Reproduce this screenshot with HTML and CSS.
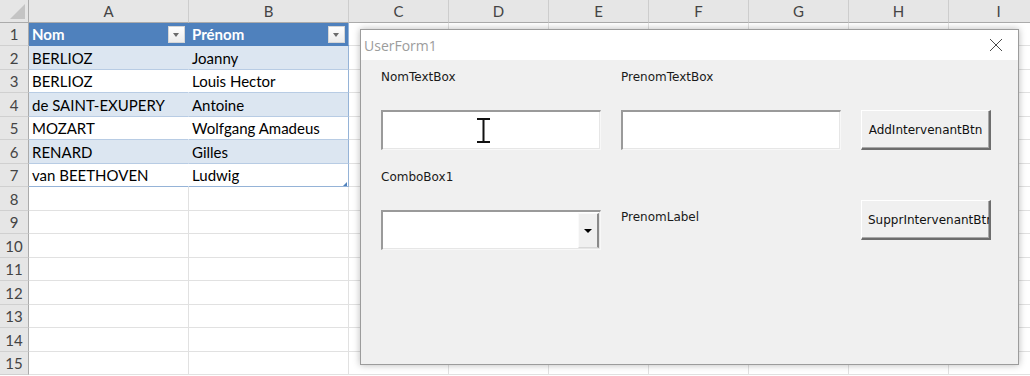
FILE: index.html
```html
<!DOCTYPE html>
<html lang="fr">
<head>
    <meta charset="UTF-8">
    <title>Intervenants - UserForm1</title>
    <link rel="stylesheet" href="styles.css">
</head>
<body>
    <div class="sheet">
        <div class="corner"><span class="corner-tri"></span></div>
        <div class="col-head">A</div>
        <div class="col-head">B</div>
        <div class="col-head">C</div>
        <div class="col-head">D</div>
        <div class="col-head">E</div>
        <div class="col-head">F</div>
        <div class="col-head">G</div>
        <div class="col-head">H</div>
        <div class="col-head">I</div>

        <div class="row-head">1</div>
        <div class="cell tbl tbl-head">Nom<span class="filter-btn"></span></div>
        <div class="cell tbl tbl-head tbl-end">Prénom<span class="filter-btn"></span></div>
        <div class="cell"></div><div class="cell"></div><div class="cell"></div><div class="cell"></div><div class="cell"></div><div class="cell"></div><div class="cell"></div>

        <div class="row-head">2</div>
        <div class="cell tbl band">BERLIOZ</div>
        <div class="cell tbl band tbl-end">Joanny</div>
        <div class="cell"></div><div class="cell"></div><div class="cell"></div><div class="cell"></div><div class="cell"></div><div class="cell"></div><div class="cell"></div>

        <div class="row-head">3</div>
        <div class="cell tbl">BERLIOZ</div>
        <div class="cell tbl tbl-end">Louis Hector</div>
        <div class="cell"></div><div class="cell"></div><div class="cell"></div><div class="cell"></div><div class="cell"></div><div class="cell"></div><div class="cell"></div>

        <div class="row-head">4</div>
        <div class="cell tbl band">de SAINT-EXUPERY</div>
        <div class="cell tbl band tbl-end">Antoine</div>
        <div class="cell"></div><div class="cell"></div><div class="cell"></div><div class="cell"></div><div class="cell"></div><div class="cell"></div><div class="cell"></div>

        <div class="row-head">5</div>
        <div class="cell tbl">MOZART</div>
        <div class="cell tbl tbl-end">Wolfgang Amadeus</div>
        <div class="cell"></div><div class="cell"></div><div class="cell"></div><div class="cell"></div><div class="cell"></div><div class="cell"></div><div class="cell"></div>

        <div class="row-head">6</div>
        <div class="cell tbl band">RENARD</div>
        <div class="cell tbl band tbl-end">Gilles</div>
        <div class="cell"></div><div class="cell"></div><div class="cell"></div><div class="cell"></div><div class="cell"></div><div class="cell"></div><div class="cell"></div>

        <div class="row-head">7</div>
        <div class="cell tbl tbl-last">van BEETHOVEN</div>
        <div class="cell tbl tbl-end tbl-last">Ludwig<span class="resize-handle"></span></div>
        <div class="cell"></div><div class="cell"></div><div class="cell"></div><div class="cell"></div><div class="cell"></div><div class="cell"></div><div class="cell"></div>

        <div class="row-head">8</div>
        <div class="cell"></div><div class="cell"></div><div class="cell"></div><div class="cell"></div><div class="cell"></div><div class="cell"></div><div class="cell"></div><div class="cell"></div><div class="cell"></div>
        <div class="row-head">9</div>
        <div class="cell"></div><div class="cell"></div><div class="cell"></div><div class="cell"></div><div class="cell"></div><div class="cell"></div><div class="cell"></div><div class="cell"></div><div class="cell"></div>
        <div class="row-head">10</div>
        <div class="cell"></div><div class="cell"></div><div class="cell"></div><div class="cell"></div><div class="cell"></div><div class="cell"></div><div class="cell"></div><div class="cell"></div><div class="cell"></div>
        <div class="row-head">11</div>
        <div class="cell"></div><div class="cell"></div><div class="cell"></div><div class="cell"></div><div class="cell"></div><div class="cell"></div><div class="cell"></div><div class="cell"></div><div class="cell"></div>
        <div class="row-head">12</div>
        <div class="cell"></div><div class="cell"></div><div class="cell"></div><div class="cell"></div><div class="cell"></div><div class="cell"></div><div class="cell"></div><div class="cell"></div><div class="cell"></div>
        <div class="row-head">13</div>
        <div class="cell"></div><div class="cell"></div><div class="cell"></div><div class="cell"></div><div class="cell"></div><div class="cell"></div><div class="cell"></div><div class="cell"></div><div class="cell"></div>
        <div class="row-head">14</div>
        <div class="cell"></div><div class="cell"></div><div class="cell"></div><div class="cell"></div><div class="cell"></div><div class="cell"></div><div class="cell"></div><div class="cell"></div><div class="cell"></div>
        <div class="row-head">15</div>
        <div class="cell"></div><div class="cell"></div><div class="cell"></div><div class="cell"></div><div class="cell"></div><div class="cell"></div><div class="cell"></div><div class="cell"></div><div class="cell"></div>
    </div>

    <div class="userform">
        <div class="form-title">
            <span class="form-caption">UserForm1</span>
            <svg class="close-icon" width="14" height="14" viewBox="0 0 14 14">
                <path d="M1 1 L13 13 M13 1 L1 13" stroke="#4a4a4a" stroke-width="1" fill="none"/>
            </svg>
        </div>
        <div class="form-body">
            <div class="form-label">NomTextBox</div>
            <div class="form-label">PrenomTextBox</div>
            <div></div>

            <div class="textbox">
                <svg class="ibeam" width="13" height="25" viewBox="0 0 13 25">
                    <rect x="0" y="0" width="13" height="2" fill="#111"/>
                    <rect x="5.5" y="0" width="2" height="25" fill="#111"/>
                    <rect x="0" y="23" width="13" height="2" fill="#111"/>
                </svg>
            </div>
            <div class="textbox"></div>
            <button class="vba-button">AddIntervenantBtn</button>

            <div class="form-label label-second">ComboBox1</div>

            <div class="combobox">
                <span class="combo-drop"><span class="combo-arrow"></span></span>
            </div>
            <div class="form-label label-combo-row">PrenomLabel</div>
            <button class="vba-button btn-suppr">SupprIntervenantBtn</button>
        </div>
    </div>
</body>
</html>
```

FILE: styles.css
```css
* {
    margin: 0;
    padding: 0;
    box-sizing: border-box;
}

body {
    position: relative;
    width: 1030px;
    height: 376px;
    overflow: hidden;
    background-color: #fff;
    font-family: Lato, "Liberation Sans", sans-serif;
    color: #000;
}

/* feuille excel */

.sheet {
    display: grid;
    grid-template-columns: 29px 160px 160px repeat(6, 100px) 100px;
    grid-template-rows: 23px repeat(7, 23px 24px) 23px;
    font-size: 15px;
}

.corner {
    position: relative;
    background-color: #e6e6e6;
    border-right: 1px solid #ababab;
    border-bottom: 1px solid #ababab;
}

.corner-tri {
    position: absolute;
    right: 3px;
    bottom: 3px;
    width: 0;
    height: 0;
    border-left: 15px solid transparent;
    border-bottom: 15px solid #c4c4c4;
}

.col-head {
    background-color: #e6e6e6;
    border-right: 1px solid #cdcdcd;
    border-bottom: 1px solid #ababab;
    color: #444;
    text-align: center;
    line-height: 22px;
}

.row-head {
    background-color: #e6e6e6;
    border-right: 1px solid #ababab;
    border-bottom: 1px solid #d0d0d0;
    color: #444;
    text-align: center;
    display: flex;
    align-items: flex-end;
    justify-content: center;
    padding-bottom: 1px;
    line-height: 20px;
}

.cell {
    position: relative;
    border-right: 1px solid #e1e1e1;
    border-bottom: 1px solid #e1e1e1;
    display: flex;
    align-items: flex-end;
    padding: 0 0 1px 3px;
    line-height: 20px;
    white-space: nowrap;
    overflow: hidden;
}

.tbl {
    border-right-color: transparent;
    border-bottom-color: #b8cce4;
}

.tbl-end {
    border-right-color: #95b3d7;
}

.tbl-last {
    border-bottom-color: #95b3d7;
}

.tbl-head {
    background-color: #4f81bd;
    border-bottom-color: #4f81bd;
    color: #fff;
    font-weight: bold;
}

.tbl-head.tbl-end {
    border-right-color: #95b3d7;
}

.band {
    background-color: #dce6f1;
}

.filter-btn {
    position: absolute;
    right: 3px;
    top: 3px;
    width: 17px;
    height: 17px;
    background: linear-gradient(#ffffff, #ececec);
    border: 1px solid #d6d6d6;
}

.filter-btn::after {
    content: "";
    position: absolute;
    left: 4px;
    top: 6px;
    border-left: 3.5px solid transparent;
    border-right: 3.5px solid transparent;
    border-top: 4px solid #6b6b6b;
}

.resize-handle {
    position: absolute;
    right: 1px;
    bottom: 0;
    width: 0;
    height: 0;
    border-left: 4px solid transparent;
    border-bottom: 4px solid #4f81bd;
}

/* userform */

.userform {
    position: absolute;
    left: 360px;
    top: 29px;
    width: 659px;
    height: 336px;
    background-color: #f0f0f0;
    border: 1px solid #9c9c9c;
    box-shadow: 0 0 7px rgba(0, 0, 0, 0.28);
    display: flex;
    flex-direction: column;
}

.form-title {
    height: 30px;
    background-color: #fff;
    display: flex;
    align-items: center;
    justify-content: space-between;
    padding: 0 15px 0 3px;
}

.form-caption {
    font-family: "Open Sans", "Noto Sans", sans-serif;
    font-size: 14px;
    color: #9c9c9c;
}

.form-body {
    flex: 1;
    display: grid;
    grid-template-columns: 220px 220px 130px;
    grid-template-rows: 40px 40px 20px 40px 40px;
    column-gap: 20px;
    padding: 10px 0 0 20px;
    font-family: "DejaVu Sans", sans-serif;
    font-size: 12px;
}

.form-label {
    line-height: 14px;
    color: #1a1a1a;
}

.label-second {
    grid-column: 1;
    grid-row: 4;
}

.label-combo-row {
    grid-column: 2;
    grid-row: 5;
}

.textbox {
    position: relative;
    background-color: #fff;
    border-style: solid;
    border-width: 2px 1px 1px 2px;
    border-color: #9a9a9a #f8f8f8 #f8f8f8 #9a9a9a;
    box-shadow: inset -1px -1px 0 #e6e6e6;
}

.ibeam {
    position: absolute;
    left: 94px;
    top: 6px;
}

.combobox {
    grid-column: 1;
    grid-row: 5;
    display: flex;
    justify-content: flex-end;
    background-color: #fff;
    border-style: solid;
    border-width: 2px 1px 1px 2px;
    border-color: #9a9a9a #f8f8f8 #f8f8f8 #9a9a9a;
    box-shadow: inset -1px -1px 0 #e6e6e6;
    padding: 1px 1px 1px 0;
}

.combo-drop {
    width: 21px;
    display: flex;
    align-items: center;
    justify-content: center;
    background-color: #f0f0f0;
    border-left: 1px solid #fafafa;
    border-top: 1px solid #fafafa;
    border-right: 2px solid #8a8a8a;
    border-bottom: 1px solid #d8d8d8;
}

.combo-arrow {
    width: 0;
    height: 0;
    border-left: 4px solid transparent;
    border-right: 4px solid transparent;
    border-top: 4px solid #000;
}

.vba-button {
    height: 40px;
    padding: 0 6px;
    background-color: #f0f0f0;
    border-style: solid;
    border-width: 1px 2px 2px 1px;
    border-color: #fff #6d6d6d #6d6d6d #fff;
    box-shadow: inset -1px -1px 0 #a8a8a8;
    font-family: inherit;
    font-size: 12px;
    color: #111;
    text-align: center;
    white-space: nowrap;
    overflow: hidden;
}

.btn-suppr {
    grid-column: 3;
    grid-row: 4 / 6;
    margin-top: 30px;
}
```
